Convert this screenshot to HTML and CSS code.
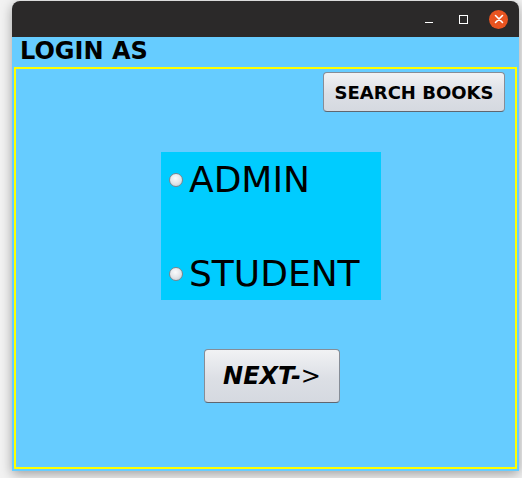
FILE: index.html
```html
<!DOCTYPE html>
<html>
<head>
<meta charset="utf-8">
<link rel="stylesheet" href="styles.css">
</head>
<body>
<div class="window">
  <div class="titlebar">
    <span class="tb-min"></span>
    <span class="tb-max"></span>
    <span class="tb-close">
      <svg width="10" height="10" viewBox="0 0 10 10"><path d="M1.5 1.5 L8.5 8.5 M8.5 1.5 L1.5 8.5" stroke="#fff" stroke-width="1.6" stroke-linecap="round"/></svg>
    </span>
  </div>
  <div class="content">
    <div class="heading">LOGIN AS</div>
    <div class="frame">
      <div class="top-row">
        <button class="btn btn-search">SEARCH BOOKS</button>
      </div>
      <div class="choices">
        <label class="choice"><span class="radio"></span><span class="choice-text">ADMIN</span></label>
        <label class="choice choice-second"><span class="radio"></span><span class="choice-text">STUDENT</span></label>
      </div>
      <button class="btn btn-next">NEXT-<span class="arrow">&gt;</span></button>
    </div>
  </div>
</div>
</body>
</html>
```
FILE: styles.css
```css
html, body {
  margin: 0;
  padding: 0;
}
body {
  width: 522px;
  height: 478px;
  background: #f2f2f2;
  overflow: hidden;
  font-family: "DejaVu Sans", sans-serif;
}
.window {
  margin-left: 12px;
  margin-top: 1px;
  width: 507px;
  height: 470px;
  display: flex;
  flex-direction: column;
  border-radius: 8px 8px 0 0;
  overflow: hidden;
  box-shadow: 0 3px 12px rgba(0,0,0,0.35);
}
.titlebar {
  height: 36px;
  flex: none;
  background: #2b2929;
  display: flex;
  align-items: center;
  justify-content: flex-end;
  padding-right: 11px;
}
.tb-min {
  width: 8px;
  height: 1px;
  background: #fff;
  margin-top: 6px;
  margin-right: 26px;
}
.tb-max {
  width: 7px;
  height: 7px;
  border: 1px solid #fff;
  margin-right: 21px;
}
.tb-close {
  width: 19px;
  height: 19px;
  border-radius: 50%;
  background: #e95420;
  display: flex;
  align-items: center;
  justify-content: center;
}
.tb-close svg { display: block; }
.content {
  flex: 1;
  background: #66ccff;
  padding: 0 2px 2px 2px;
  display: flex;
  flex-direction: column;
}
.heading {
  height: 30px;
  line-height: 28px;
  font-size: 24px;
  font-weight: bold;
  color: #000;
  padding-left: 6px;
}
.frame {
  flex: 1;
  border: 2px solid #ffff00;
  display: flex;
  flex-direction: column;
  align-items: flex-start;
}
.top-row {
  align-self: stretch;
  display: flex;
  justify-content: flex-end;
  padding-top: 3px;
  padding-right: 10px;
}
.btn {
  font-family: "DejaVu Sans", sans-serif;
  font-weight: bold;
  color: #000;
  border: 1px solid #868d97;
  border-bottom-color: #5f6670;
  border-radius: 4px;
  background: linear-gradient(#f1f2f4, #dcdfe5 55%, #d5d9e0);
  padding: 0;
  box-sizing: border-box;
  display: flex;
  align-items: center;
  justify-content: center;
}
.btn-search {
  width: 182px;
  height: 40px;
  font-size: 18px;
}
.choices {
  margin-top: 40px;
  margin-left: 145px;
  width: 220px;
  height: 148px;
  box-sizing: border-box;
  background: #00ccff;
  padding: 7px 0 0 8px;
  display: flex;
  flex-direction: column;
}
.choice {
  display: flex;
  align-items: center;
  height: 42px;
}
.choice-second {
  margin-top: 52px;
}
.radio {
  width: 14px;
  height: 14px;
  box-sizing: border-box;
  border-radius: 50%;
  border: 1px solid #80858d;
  background: radial-gradient(circle at 45% 35%, #fafbfc 0%, #e4e6ea 50%, #c3c8cf 100%);
  flex: none;
}
.choice-text {
  margin-left: 6px;
  font-size: 36px;
  line-height: 42px;
  color: #000;
}
.btn-next {
  margin-top: 49px;
  margin-left: 188px;
  width: 136px;
  height: 54px;
  font-size: 24px;
  font-style: italic;
}
.arrow {
  font-weight: normal;
}
```
